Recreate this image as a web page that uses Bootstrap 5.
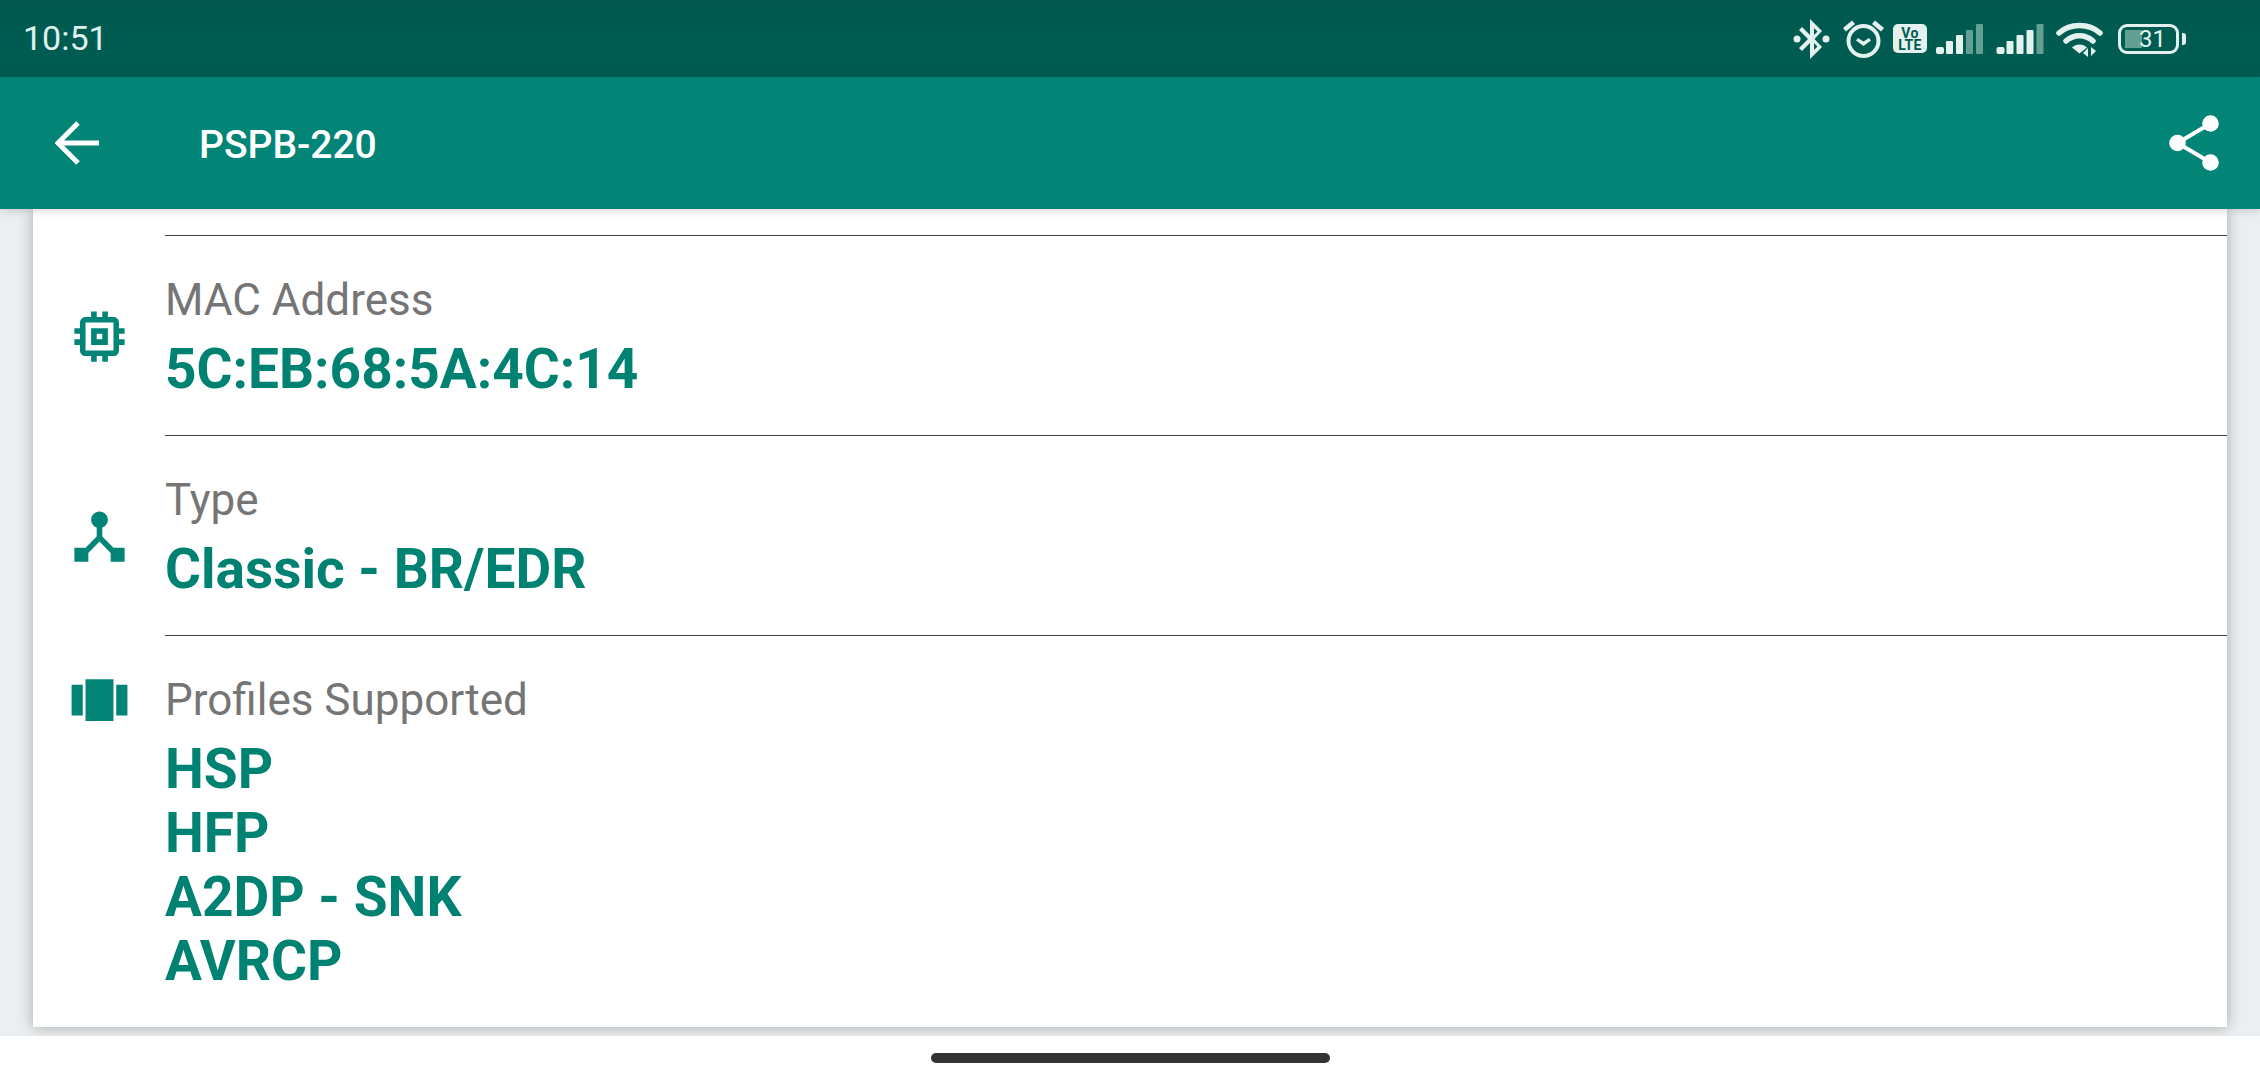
<!DOCTYPE html>
<html lang="en">
<head>
    <meta charset="UTF-8">
    <title>PSPB-220</title>
    <link href="https://cdn.jsdelivr.net/npm/bootstrap@5.3.0/dist/css/bootstrap.min.css" rel="stylesheet">
    <style>
        body { font-family: Roboto, "Liberation Sans", sans-serif; background: #fff; overflow: hidden; }
        .app-shell { height: 1080px; }
        .status-strip { height: 77px; background: linear-gradient(#00564b, #005b50 40%); color: #dff1ee; padding: 0 74px 0 23px; }
        .status-time { font-size: 34px; line-height: 77px; }
        .status-icons svg { display: block; fill: #e3f2ef; }
        .status-icons .dim { fill: #62a094; }
        .ic-bt { margin-right: 13px; }
        .ic-alarm { margin-right: 9px; }
        .ic-volte { width: 34px; height: 29px; margin-right: 9px; background: #e3f2ef; border-radius: 5px; color: #005b50; font-size: 14px; font-weight: 700; line-height: 12px; text-align: center; padding-top: 3px; letter-spacing: .3px; }
        .ic-sig { margin-right: 13px; }
        .ic-wifi { margin: 0 15px 0 -1px; }
        .ic-batt { width: 61px; height: 30px; border: 3px solid #e3f2ef; border-radius: 9px; font-size: 24px; line-height: 24px; text-align: center; color: #e3f2ef; padding-left: 8px; background: linear-gradient(to right, #62a094 34%, transparent 34%) no-repeat 4px 3px / 49px 18px; }
        .ic-nub { width: 4px; height: 12px; background: #e3f2ef; border-radius: 0 3px 3px 0; margin-left: 3px; }
        .tool-strip { height: 132px; background: #028576; color: #fff; padding: 0 41px 0 55px; box-shadow: 0 2px 8px rgba(0, 0, 0, .16); z-index: 2; }
        .tool-title { font-size: 39px; font-weight: 500; margin: 3px 0 0 100px; line-height: 44px; }
        .page-body { background: #eceff1; padding: 0 33px 9px; min-height: 0; }
        .info-sheet { background: #fff; box-shadow: 0 0 14px rgba(0, 0, 0, .3); padding-top: 26px; }
        .sheet-top { margin-left: 132px; border-top: 1px solid #3f3f3f; }
        .info-line { display: flex; }
        .line-icon { width: 132px; flex: none; display: flex; justify-content: center; }
        .line-icon svg { fill: #028576; display: block; margin-top: 67px; }
        .line-icon svg.carousel-ic { margin-top: 32px; }
        .line-text { flex: 1; height: 200px; padding-top: 39px; border-bottom: 1px solid #3f3f3f; }
        .line-text.last-line { border: 0; height: auto; }
        .info-label { font-size: 44px; line-height: 50px; color: #757575; }
        .info-value { font-size: 55px; line-height: 64px; font-weight: 700; color: #008272; margin-top: 12px; }
        .home-strip { height: 44px; background: #fff; }
        .home-pill { width: 399px; height: 10px; background: #333; border-radius: 5px; margin-top: 17px; }
    </style>
</head>
<body>
<div class="app-shell d-flex flex-column">
    <div class="status-strip d-flex align-items-center justify-content-between">
        <span class="status-time">10:51</span>
        <div class="status-icons d-flex align-items-center">
            <svg class="ic-bt" width="37" height="40" viewBox="0 0 37 40"><path d="M17 0l12 12-7.500 8 7.500 8-12 12V24l-8 8-3-3 9-9-9-9 3-3 8 8zm4 9v7l3.500-3.500zm0 15v7l3.500-3.500z"/><circle cx="4" cy="20" r="3.500"/><circle cx="33" cy="20" r="3.500"/></svg>
            <svg class="ic-alarm" width="41" height="38" viewBox="0 0 41 38"><path d="M9 .5l3 3.500L3 11.500 0 8zM32 .5L41 8l-3 3.500L29 4z"/><path fill-rule="evenodd" d="M20.500 4a17 17 0 1 1 0 34 17 17 0 0 1 0-34zm0 4a13 13 0 1 0 0 26 13 13 0 0 0 0-26z"/><path d="M20.500 21.500l5.500-3.500 2 2.600-7.500 5.400-7.500-5.400 2-2.600z"/></svg>
            <div class="ic-volte">Vo<br>LTE</div>
            <svg class="ic-sig" width="47" height="30" viewBox="0 0 47 30"><rect x="0" y="23" width="8" height="7" rx="2"/><rect x="10" y="17" width="7" height="13" rx="1"/><rect x="20" y="11" width="7" height="19" rx="1"/><rect class="dim" x="30" y="6" width="7" height="24" rx="1"/><rect class="dim" x="40" y="0" width="7" height="30" rx="1"/></svg>
            <svg class="ic-sig" width="48" height="30" viewBox="0 0 47 30"><rect x="0" y="23" width="8" height="7" rx="2"/><rect x="10" y="17" width="7" height="13" rx="1"/><rect x="20" y="11" width="7" height="19" rx="1"/><rect x="30" y="6" width="7" height="24" rx="1"/><rect class="dim" x="40" y="0" width="7" height="30" rx="1"/></svg>
            <svg class="ic-wifi" width="47" height="36" viewBox="0 0 47 36"><g fill="none" stroke="#e3f2ef" stroke-width="5.500" stroke-linecap="round"><path d="M3 12C14 2 33 2 44 12"/><path d="M10 20c8-7 19-7 27 0"/></g><path d="M16 26.500c4-4 11-4 15 0l-7.500 6z"/><path d="M32 36v-9l-5 5zM35 26v9l5-5z"/></svg>
            <div class="ic-batt">31</div>
            <div class="ic-nub"></div>
        </div>
    </div>
    <div class="tool-strip d-flex align-items-center">
        <svg width="44" height="44" viewBox="0 0 44 44"><path d="M44 22H3M23 2L3 22l20 20" fill="none" stroke="#fff" stroke-width="5"/></svg>
        <span class="tool-title">PSPB-220</span>
        <svg class="ms-auto" width="50" height="56" viewBox="0 0 50 56"><path d="M41.500 8.500L8.500 28l33 19.500" fill="none" stroke="#fff" stroke-width="4"/><circle cx="41.500" cy="8.500" r="8.300" fill="#fff"/><circle cx="8.500" cy="28" r="8.300" fill="#fff"/><circle cx="41.500" cy="47.500" r="8.300" fill="#fff"/></svg>
    </div>
    <div class="page-body d-flex flex-column flex-grow-1">
        <div class="info-sheet flex-grow-1">
            <div class="sheet-top"></div>
            <div class="info-line">
                <div class="line-icon">
                    <svg width="67" height="67" viewBox="0 0 24 24"><path d="M15 9H9v6h6V9zm-2 4h-2v-2h2v2zm8-2V9h-2V7c0-1.100-.9-2-2-2h-2V3h-2v2h-2V3H9v2H7c-1.100 0-2 .9-2 2v2H3v2h2v2H3v2h2v2c0 1.100.9 2 2 2h2v2h2v-2h2v2h2v-2h2c1.100 0 2-.9 2-2v-2h2v-2h-2v-2h2zm-4 6H7V7h10v10z"/></svg>
                </div>
                <div class="line-text">
                    <div class="info-label">MAC Address</div>
                    <div class="info-value">5C:EB:68:5A:4C:14</div>
                </div>
            </div>
            <div class="info-line">
                <div class="line-icon">
                    <svg width="67" height="67" viewBox="0 0 24 24"><path d="M17 16l-4-4V8.820C14.160 8.400 15 7.300 15 6c0-1.660-1.340-3-3-3S9 4.340 9 6c0 1.300.84 2.400 2 2.820V12l-4 4H3v5h5v-3.050l4-4.200 4 4.200V21h5v-5h-4z"/></svg>
                </div>
                <div class="line-text">
                    <div class="info-label">Type</div>
                    <div class="info-value">Classic - BR/EDR</div>
                </div>
            </div>
            <div class="info-line">
                <div class="line-icon">
                    <svg class="carousel-ic" width="67" height="67" viewBox="0 0 24 24"><path d="M7 19h10V4H7v15zm-5-2h4V6H2v11zM18 6v11h4V6h-4z"/></svg>
                </div>
                <div class="line-text last-line">
                    <div class="info-label">Profiles Supported</div>
                    <div class="info-value">HSP<br>HFP<br>A2DP - SNK<br>AVRCP</div>
                </div>
            </div>
        </div>
    </div>
    <div class="home-strip d-flex justify-content-center">
        <div class="home-pill"></div>
    </div>
</div>
<script src="https://cdn.jsdelivr.net/npm/bootstrap@5.3.0/dist/js/bootstrap.bundle.min.js"></script>
</body>
</html>
